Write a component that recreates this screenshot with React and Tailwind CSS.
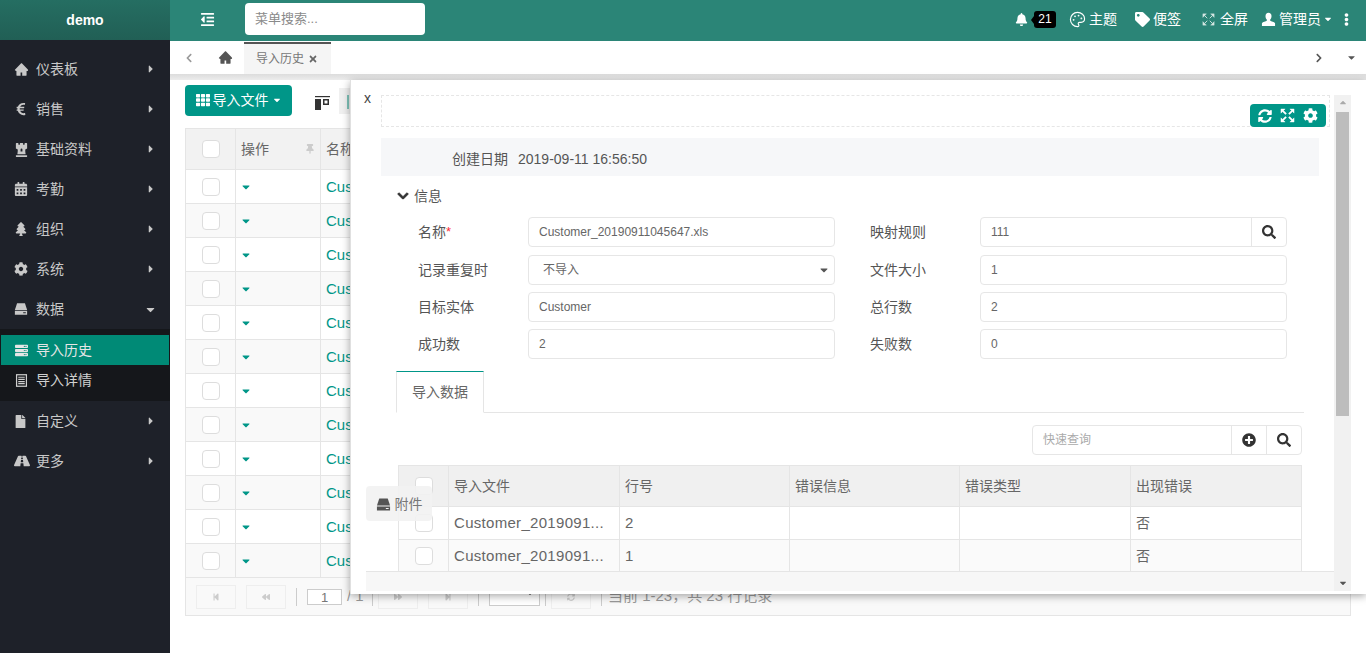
import React from 'react';
import {
  FaEuroSign, FaChessRook, FaCalendarAlt, FaTree, FaCog, FaServer, FaFile, FaRoad,
  FaCaretRight, FaCaretDown, FaChevronLeft, FaChevronRight, FaChevronDown, FaTimes, FaTh, FaThumbtack, FaBell,
  FaTag, FaEllipsisV, FaSyncAlt, FaSearch, FaPlusCircle, FaStepBackward,
  FaBackward, FaForward, FaStepForward, FaOutdent,
} from 'react-icons/fa';
import { AiFillHome } from 'react-icons/ai';
import { Palette } from 'lucide-react';

const FONT = "font-['Liberation_Sans','Noto_Sans_CJK_SC',sans-serif]";

function HddIcon({ size = 14, className }) {
  return (
    <svg width={size} height={size} viewBox="0 0 16 16" fill="currentColor" className={className}>
      <path d="M3.5 1.5h9L15 9H1z" />
      <path fillRule="evenodd" d="M1 10h14v4.5H1z M10.5 11.6h3v1.2h-3z" />
    </svg>
  );
}

function FullscreenIcon({ size = 14, weight = 1.6 }) {
  return (
    <svg width={size} height={size} viewBox="0 0 16 16" fill="currentColor" stroke="currentColor" strokeWidth={weight}>
      <path d="M1 1h4.5L1 5.5z" strokeWidth="0.4" />
      <path d="M15 1h-4.5L15 5.5z" strokeWidth="0.4" />
      <path d="M1 15h4.5L1 10.5z" strokeWidth="0.4" />
      <path d="M15 15h-4.5L15 10.5z" strokeWidth="0.4" />
      <path d="M3 3l3.5 3.5M13 3L9.5 6.5M3 13l3.5-3.5M13 13L9.5 9.5" fill="none" />
    </svg>
  );
}

function UserIcon({ size = 15 }) {
  return (
    <svg width={size} height={size} viewBox="0 0 16 16" fill="currentColor">
      <path d="M8 .8c-2 0-3.2 1.5-3.2 3.7 0 1.5.6 2.8 1.4 3.6v1.3c-1 .6-4.4 1.2-5.2 2.6V15h14v-3c-.8-1.4-4.2-2-5.2-2.6V8.100c.8-.8 1.4-2.100 1.400-3.600C11.200 2.300 10 .8 8 .8z" />
    </svg>
  );
}

function ListAltIcon({ size = 13 }) {
  return (
    <svg width={size} height={size} viewBox="0 0 14 14" fill="none" stroke="currentColor" strokeWidth="1.3">
      <rect x="1.700" y="0.800" width="10.600" height="12.400" />
      <path d="M3.500 3.500h7M3.500 5.800h7M3.500 8.100h7M3.500 10.400h7" />
    </svg>
  );
}

function LayoutIcon() {
  return (
    <svg width="15" height="14" viewBox="0 0 15 14" fill="#333">
      <path d="M0 0h15v1.200H0z" />
      <path d="M0 3h6v11H0z" />
      <path fillRule="evenodd" d="M8 3h6v6H8z M9.500 4.500h3v3h-3z" />
    </svg>
  );
}

const MENU_TOP = [
  { label: '仪表板', icon: AiFillHome, size: 15 },
  { label: '销售', icon: FaEuroSign, size: 14 },
  { label: '基础资料', icon: FaChessRook, size: 15 },
  { label: '考勤', icon: FaCalendarAlt, size: 14 },
  { label: '组织', icon: FaTree, size: 14 },
  { label: '系统', icon: FaCog, size: 14 },
];

const MENU_BOTTOM = [
  { label: '自定义', icon: FaFile, size: 13 },
  { label: '更多', icon: FaRoad, size: 16 },
];

const FIELDS_LEFT = [
  { label: '名称', value: 'Customer_20190911045647.xls', required: true },
  { label: '记录重复时', value: '不导入', select: true },
  { label: '目标实体', value: 'Customer' },
  { label: '成功数', value: '2' },
];

const FIELDS_RIGHT = [
  { label: '映射规则', value: '111', lookup: true },
  { label: '文件大小', value: '1' },
  { label: '总行数', value: '2' },
  { label: '失败数', value: '0' },
];

const BG_ROWS = Array.from({ length: 12 }, (_, i) => i);

function MenuItem({ item, open }) {
  const Icon = item.icon;
  return (
    <div className="h-10 flex items-center pl-[14px] pr-[13px] text-[#c8c8c8] text-sm">
      <span className="w-[22px] flex justify-start"><Icon size={item.size} /></span>
      <span>{item.label}</span>
      <span className="ml-auto">{open ? <FaCaretDown size={13} /> : <FaCaretRight size={12} />}</span>
    </div>
  );
}

function Sidebar() {
  return (
    <aside className="w-[170px] shrink-0 bg-[#1e2129] h-full">
      <div className="h-10 pb-px bg-gradient-to-b from-[#256e62] to-[#215f55] flex items-center justify-center text-white font-bold text-sm">demo</div>
      <div className="pt-[9px]">
        {MENU_TOP.map((item) => <MenuItem key={item.label} item={item} />)}
        <MenuItem item={{ label: '数据', icon: HddIcon, size: 14 }} open />
        <div className="h-[72px] bg-[#15171b] pt-[6px]">
          <div className="h-[30px] mx-px bg-[#008a76] flex items-center pl-[14px] text-[#e6e6e6] text-sm">
            <span className="w-[21px]"><FaServer size={13} /></span>导入历史
          </div>
          <div className="h-[30px] flex items-center pl-[15px] text-[#d0d0d0] text-sm">
            <span className="w-[21px]"><ListAltIcon /></span>导入详情
          </div>
        </div>
        {MENU_BOTTOM.map((item) => <MenuItem key={item.label} item={item} />)}
      </div>
    </aside>
  );
}

function TopBar() {
  return (
    <header className="h-[41px] pb-[3px] bg-[#2b8577] flex items-center text-white text-sm">
      <span className="ml-[30px]"><FaOutdent size={15} /></span>
      <div className="ml-[30px] w-[180px] h-8 bg-white rounded-sm flex items-center pl-2.5 text-[#8a8a8a] text-[13px]">菜单搜索...</div>
      <div className="ml-auto flex items-center pr-[13px]">
        <FaBell size={13} />
        <span className="relative ml-[6px] h-[17px] w-[22px] bg-black rounded-[3px] flex items-center justify-center text-xs">
          <span className="absolute -left-[3px] top-[5px] w-0 h-0 border-y-[4px] border-y-transparent border-r-[3px] border-r-black" />
          21
        </span>
        <span className="ml-[13px] flex items-center gap-[3px]"><Palette size={17} strokeWidth={1.6} />主题</span>
        <span className="ml-[18px] flex items-center gap-[3px]"><FaTag size={15} />便签</span>
        <span className="ml-[21px] flex items-center gap-[5px]"><span className="text-[#d5e7e3]"><FullscreenIcon size={13} weight={1.1} /></span>全屏</span>
        <span className="ml-[13px] flex items-center gap-[3px]"><UserIcon />管理员</span>
        <span className="ml-[2px]"><FaCaretDown size={10} /></span>
        <span className="ml-[7px]"><FaEllipsisV size={13} /></span>
      </div>
    </header>
  );
}

function TabBar() {
  return (
    <div className="h-[39px] flex flex-col">
      <div className="h-[33px] bg-white flex items-stretch text-[#555]">
        <span className="w-[37px] flex items-center justify-center text-[#999]"><FaChevronLeft size={10} /></span>
        <span className="w-[37px] flex items-center justify-center"><AiFillHome size={15} /></span>
        <div className="w-[87px] mt-px pb-px bg-[#f5f5f5] border-t-2 border-[#555] flex items-center justify-center gap-1 pr-px text-xs text-[#777]">
          导入历史 <FaTimes size={10} className="text-[#666]" />
        </div>
        <span className="ml-auto w-[37px] flex items-center justify-center"><FaChevronRight size={10} /></span>
        <span className="w-[29px] flex items-center justify-center"><FaCaretDown size={11} /></span>
      </div>
      <div className="h-[6px] bg-gradient-to-b from-[#dcdcdc] to-[#ececec]" />
    </div>
  );
}

function PagerButton({ children, className = '' }) {
  return <span className={`w-10 h-6 border border-[#eee] flex items-center justify-center text-[#ccc] ${className}`}>{children}</span>;
}

function BackgroundGrid() {
  return (
    <div className="px-[15px]">
      <div className="pt-[5px] flex items-start h-[37px]">
        <button className="w-[107px] h-[31px] pb-px bg-[#009688] rounded text-white text-sm flex items-center justify-center gap-[3px]">
          <FaTh size={14} />导入文件<FaCaretDown size={10} />
        </button>
        <span className="ml-[23px] mt-[11px]"><LayoutIcon /></span>
        <span className="ml-[9px] mt-[3px] w-3 h-[26px] bg-[#f0f0f0] pl-2 pt-[7px]">
          <span className="block w-[2px] h-[14px] bg-[#7fc4ba]" />
        </span>
      </div>
      <div className="mt-[11px] border border-[#e5e5e5] bg-[#f9f9f9]">
        <div className="h-[41px] flex bg-[#f2f2f2] border-b border-[#e5e5e5] text-sm text-[#666]">
          <div className="w-[50px] border-r border-[#e5e5e5] flex items-center justify-center">
            <span className="w-[18px] h-[18px] bg-white border border-[#ddd] rounded-sm" />
          </div>
          <div className="w-[85px] border-r border-[#e5e5e5] flex items-center px-[5px]">
            操作<span className="ml-auto text-[#ccc]"><FaThumbtack size={10} /></span>
          </div>
          <div className="flex items-center px-[5px]">名称</div>
        </div>
        {BG_ROWS.map((i) => (
          <div key={i} className={`h-[34px] flex border-b border-[#e5e5e5] ${i % 2 ? 'bg-[#f9f9f9]' : 'bg-white'}`}>
            <div className="w-[50px] border-r border-[#e5e5e5] flex items-center justify-center">
              <span className="w-[18px] h-[18px] bg-white border border-[#ddd] rounded-sm" />
            </div>
            <div className="w-[85px] border-r border-[#e5e5e5] flex items-center pl-[4px] text-[#009688]"><FaCaretDown size={12} /></div>
            <div className="flex items-center px-[5px] pt-px text-[#009688] text-[15px]">Customer</div>
          </div>
        ))}
        <div className="h-[37px] flex items-center pl-[10px] text-[#999] text-[15px]">
          <PagerButton><FaStepBackward size={8} /></PagerButton>
          <PagerButton className="ml-2.5"><FaBackward size={8} /></PagerButton>
          <span className="ml-2.5 w-px h-[18px] bg-[#ccc]" />
          <span className="ml-2.5 w-[35px] h-4 bg-white border border-[#ccc] text-center text-[13px] leading-4 text-[#777]">1</span>
          <span className="ml-[5px] w-[20px]">/ 1</span>
          <span className="ml-[5px] w-px h-[18px] bg-[#ccc]" />
          <PagerButton className="ml-[5px]"><FaForward size={8} /></PagerButton>
          <PagerButton className="ml-2.5"><FaStepForward size={8} /></PagerButton>
          <span className="ml-2.5 w-px h-[18px] bg-[#ccc]" />
          <span className="ml-2.5 w-[51px] h-[19px] bg-white border border-[#ccc] flex justify-end pr-1 text-[#666]"><FaCaretDown size={10} /></span>
          <span className="ml-[5px] w-px h-[18px] bg-[#ccc]" />
          <PagerButton className="ml-[5px] border-[#ddd] text-[#999]"><FaSyncAlt size={8} /></PagerButton>
          <span className="ml-2.5 w-px h-[18px] bg-[#ccc]" />
          <span className="ml-[6px]">当前 1-23，共 23 行记录</span>
        </div>
      </div>
    </div>
  );
}

function Field({ field }) {
  return (
    <div className="h-[37px] first:h-[38px] flex items-start">
      <label className="w-[132px] h-[30px] flex items-center pl-[22px] text-sm text-[#555]">
        {field.label}{field.required && <span className="text-red-500 text-[13px]">*</span>}
      </label>
      <div className="flex-1 h-[30px] bg-white border border-[#e6e6e6] rounded-sm flex items-center pl-[10px] text-xs text-[#666]">
        <span className={field.select ? 'pl-1' : ''}>{field.value}</span>
        {field.select && <span className="ml-auto mr-1 text-[#555]"><FaCaretDown size={12} /></span>}
        {field.lookup && (
          <span className="ml-auto h-full w-[35px] border-l border-[#e6e6e6] flex items-center justify-center text-[#333]"><FaSearch size={14} /></span>
        )}
      </div>
    </div>
  );
}

function DetailWindow() {
  const cols = ['w-[171px]', 'w-[170px]', 'w-[170px]', 'w-[171px]'];
  const cell = 'border-r border-[#e5e5e5]';
  return (
    <section className={`absolute left-[350px] top-[80px] w-[1016px] h-[514px] bg-white border-l border-[#e0e0e0] shadow-[0_2px_8px_rgba(0,0,0,0.35)] pl-[15px] pt-[15px] ${FONT}`}>
      <span className="absolute left-[13px] top-[8px] text-sm text-[#444]">x</span>
      <div className="relative w-[949px] ml-[15px] h-[32px] border border-dashed border-[#e6e6e6]">
        <div className="absolute right-[3px] top-[8px] w-[76px] h-[23px] bg-[#009688] rounded flex items-center justify-around px-1 text-white">
          <FaSyncAlt size={14} /><FullscreenIcon size={15} weight={2} /><FaCog size={15} />
        </div>
      </div>
      <div className="w-[938px] ml-[15px] mt-[11px] h-[38px] pt-[3px] bg-[#f6f7f9] flex items-center text-sm text-[#555]">
        <span className="ml-[71px]">创建日期</span>
        <span className="ml-[10px]">2019-09-11 16:56:50</span>
      </div>
      <div className="ml-[31px] mt-[10px] h-5 flex items-center gap-[5px] text-sm text-[#555]">
        <FaChevronDown size={12} className="text-[#333]" stroke="currentColor" strokeWidth={40} />信息
      </div>
      <div className="ml-[30px] mt-[11px] w-[891px] flex justify-between">
        <div className="w-[439px]">{FIELDS_LEFT.map((f) => <Field key={f.label} field={f} />)}</div>
        <div className="w-[439px]">{FIELDS_RIGHT.map((f) => <Field key={f.label} field={f} />)}</div>
      </div>
      <div className="ml-[30px] mt-[5px] w-[908px] h-[42px] border-b border-[#e5e5e5]">
        <div className="w-[88px] h-[42px] bg-white border border-[#e5e5e5] border-b-white border-t-[#009688] flex items-center justify-center text-sm text-[#666]">导入数据</div>
      </div>
      <div className="ml-[666px] mt-3 w-[270px] h-[30px] border border-[#e6e6e6] rounded-sm flex items-center text-xs text-[#aaa]">
        <span className="pl-[10px] flex-1">快速查询</span>
        <span className="w-[35px] h-full border-l border-[#e6e6e6] flex items-center justify-center text-[#333]"><FaPlusCircle size={14} /></span>
        <span className="w-[35px] h-full border-l border-[#e6e6e6] flex items-center justify-center text-[#333]"><FaSearch size={14} /></span>
      </div>
      <div className="ml-[32px] mt-[10px] w-[904px] border border-[#e5e5e5] text-sm text-[#666]">
        <div className="h-[41px] flex bg-[#f0f0f0] border-b border-[#e5e5e5]">
          <div className={`w-[50px] ${cell} flex items-center justify-center`}><span className="w-[18px] h-[18px] bg-white border border-[#ddd] rounded-sm" /></div>
          <div className={`${cols[0]} ${cell} flex items-center px-[5px]`}>导入文件</div>
          <div className={`${cols[1]} ${cell} flex items-center px-[5px]`}>行号</div>
          <div className={`${cols[2]} ${cell} flex items-center px-[5px]`}>错误信息</div>
          <div className={`${cols[3]} ${cell} flex items-center px-[5px]`}>错误类型</div>
          <div className="flex-1 flex items-center px-[5px]">出现错误</div>
        </div>
        {['2', '1'].map((n, i) => (
          <div key={n} className={`h-[33px] flex border-b border-[#e5e5e5] ${i ? 'bg-[#fafafa]' : 'bg-white'}`}>
            <div className={`w-[50px] ${cell} flex items-center justify-center`}><span className="w-[18px] h-[18px] bg-white border border-[#ddd] rounded-sm" /></div>
            <div className={`${cols[0]} ${cell} flex items-center px-[5px] text-[15px] tracking-[0.3px] whitespace-nowrap`}>Customer_2019091...</div>
            <div className={`${cols[1]} ${cell} flex items-center px-[5px] text-[15px]`}>{n}</div>
            <div className={`${cols[2]} ${cell}`} />
            <div className={`${cols[3]} ${cell}`} />
            <div className="flex-1 flex items-center px-[5px]">否</div>
          </div>
        ))}
      </div>
      {/* bottom strip */}
      <div className="absolute left-[15px] top-[491px] w-[968px] h-5 bg-[#f7f7f7] border-t border-[#e5e5e5]" />
      {/* scrollbar */}
      <div className="absolute left-[983px] top-[15px] w-[17px] h-[496px] bg-[#f1f1f1] flex flex-col items-center text-[#aaa]">
        <span className="h-[17px] rotate-180 flex items-center"><FaCaretDown size={10} /></span>
        <span className="w-[13px] h-[304px] bg-[#bdbdbd]" />
        <span className="mt-auto h-[17px] text-[#555] flex items-center"><FaCaretDown size={10} /></span>
      </div>
      {/* attachment tab */}
      <div className="absolute left-[15px] top-[406px] w-[66px] h-[35px] pt-px bg-[#f2f2f2]/90 rounded flex items-center justify-center gap-1 text-sm text-[#777]">
        <HddIcon size={15} className="text-[#555]" />附件
      </div>
    </section>
  );
}

export default function App() {
  return (
    <div className={`relative w-[1366px] h-[653px] overflow-hidden flex bg-white ${FONT}`}>
      <Sidebar />
      <main className="flex-1 min-w-0">
        <TopBar />
        <TabBar />
        <BackgroundGrid />
      </main>
      <DetailWindow />
    </div>
  );
}
